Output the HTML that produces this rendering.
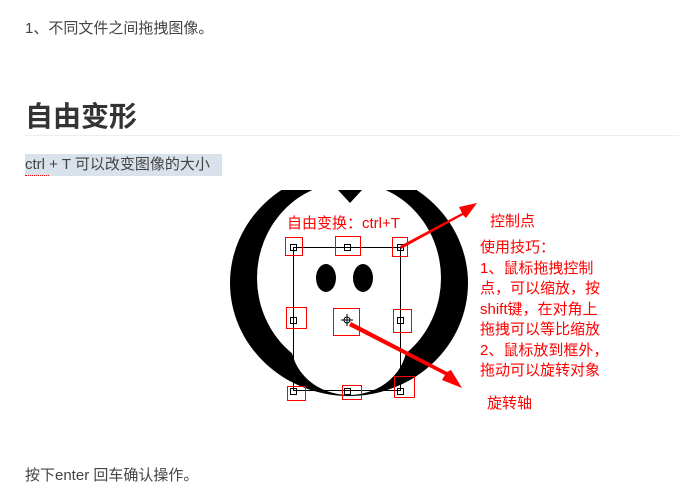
<!DOCTYPE html><html><head><meta charset="utf-8"><style>
body{margin:0;width:679px;height:498px;background:#fff;font-family:"Liberation Sans","Noto Sans CJK SC",sans-serif;color:#333;position:relative;overflow:hidden}
.t{position:absolute;white-space:nowrap}
.r{color:#f00;font-size:15px;position:absolute;white-space:nowrap;font-family:"Liberation Sans","Noto Sans CJK SC",sans-serif}
</style></head><body>
<div class="t" style="left:25px;top:17px;font-size:15px;color:#444">1、不同文件之间拖拽图像。</div>
<div class="t" style="left:25px;top:95px;font-size:28px;font-weight:bold;color:#333">自由变形</div>
<div style="position:absolute;left:25px;top:135px;width:654px;height:1px;background:#eee"></div>
<div class="t" style="left:25px;top:154px;height:22px;line-height:22px;padding-right:12px;background:#d9e1ea;font-size:15px;color:#444">ctrl + T 可以改变图像的大小</div>
<div style="position:absolute;left:25px;top:175px;width:24px;border-bottom:1px dotted #e00"></div>
<svg style="position:absolute;left:0;top:0" width="679" height="498">
<defs><clipPath id="c"><rect x="225" y="190" width="250" height="215"/></clipPath></defs>
<g clip-path="url(#c)">
<ellipse cx="349" cy="283" rx="119" ry="113" fill="#000"/>
<ellipse cx="349" cy="278" rx="92" ry="96" fill="#fff"/>
<ellipse cx="349" cy="343" rx="58" ry="52" fill="#fff"/>
<path d="M338 190 L350 203 L362 190Z" fill="#000"/>
</g>
<ellipse cx="326" cy="278" rx="10" ry="14" fill="#000"/>
<ellipse cx="363" cy="278" rx="10" ry="14" fill="#000"/>
<g fill="none" stroke="#000" stroke-width="1">
<rect x="293.5" y="247.5" width="107" height="143"/>
<rect x="290.5" y="244.5" width="6" height="6"/><rect x="344.5" y="244.5" width="6" height="6"/><rect x="397.5" y="244.5" width="6" height="6"/>
<rect x="290.5" y="317.5" width="6" height="6"/><rect x="397.5" y="317.5" width="6" height="6"/>
<rect x="290.5" y="388.5" width="6" height="6"/><rect x="344.5" y="388.5" width="6" height="6"/><rect x="397.5" y="388.5" width="6" height="6"/>
<circle cx="347" cy="320" r="3"/><path d="M347 314v12M341 320h12"/>
</g>
<g fill="none" stroke="#f00" stroke-width="1">
<rect x="285.5" y="237.5" width="17" height="18"/><rect x="335.5" y="236.5" width="25" height="19"/><rect x="392.5" y="237.5" width="15" height="19"/>
<rect x="286.5" y="307.5" width="20" height="21"/><rect x="393.5" y="309.5" width="18" height="23"/>
<rect x="333.5" y="308.5" width="26" height="27"/>
<rect x="287.5" y="386.5" width="18" height="14"/><rect x="342.5" y="385.5" width="19" height="14"/><rect x="394.5" y="376.5" width="20" height="21"/>
</g>
<path d="M400 246 L462 213 L459 207 L477 203 L466 218 L463 215 L401 249Z" fill="#f00"/>
<path d="M349 326 L445 375 L442 380 L462 388 L451 370 L447 372 L351 322Z" fill="#f00"/>
</svg>
<div class="r" style="left:287px;top:212px">自由变换：ctrl+T</div>
<div class="r" style="left:490px;top:210px">控制点</div>
<div class="r" style="left:480px;top:238px;line-height:20.5px">使用技巧：<br>1、鼠标拖拽控制<br>点，可以缩放，按<br>shift键，在对角上<br>拖拽可以等比缩放<br>2、鼠标放到框外，<br>拖动可以旋转对象</div>
<div class="r" style="left:487px;top:392px">旋转轴</div>
<div class="t" style="left:25px;top:464px;font-size:15px;color:#444">按下enter 回车确认操作。</div>
</body></html>
